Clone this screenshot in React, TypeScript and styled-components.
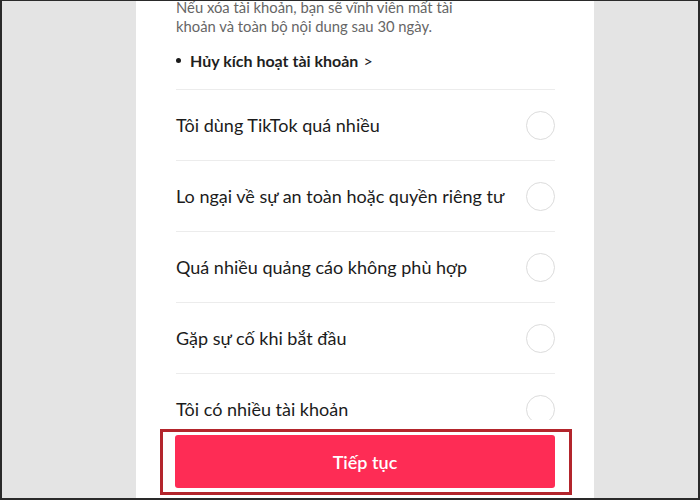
import React from "react";
import styled, { createGlobalStyle } from "styled-components";

const Global = createGlobalStyle`
  html, body { margin: 0; padding: 0; }
  body { width: 700px; height: 500px; overflow: hidden; background: #e5e5e5; }
`;

const Frame = styled.div`
  box-sizing: border-box;
  width: 700px;
  height: 500px;
  border: 1px solid #2a2a2a;
  border-width: 1px 2px 2px 2px;
  background: #e4e4e4;
  display: flex;
  justify-content: flex-start;
  padding-left: 134px;
  overflow: hidden;
`;

const Panel = styled.div`
  position: relative;
  width: 458px;
  height: 100%;
  background: #ffffff;
  overflow: hidden;
  font-family: Lato, "Liberation Sans", sans-serif;
`;

const Content = styled.div`
  padding: 0 39px 0 40px;
  margin-top: -3px;
`;

const Note = styled.p`
  margin: 0;
  font-size: 14.8px;
  line-height: 19px;
  color: #666666;
  width: 300px;
`;

const BulletLink = styled.div`
  display: flex;
  align-items: center;
  gap: 9px;
  margin-top: 14px;
  height: 20px;
  font-size: 16px;
  font-weight: 700;
  color: #1f1f1f;
`;

const Dot = styled.span`
  width: 5px;
  height: 5px;
  border-radius: 50%;
  background: #1a1a1a;
`;

const Chevron = styled.span`
  font-weight: 400;
  margin-left: 5px;
`;

const List = styled.div`
  margin-top: 19px;
`;

const Row = styled.div`
  display: flex;
  align-items: center;
  justify-content: space-between;
  height: 70px;
  border-top: 1px solid #ececec;
`;

const Label = styled.span`
  font-size: 18px;
  color: #1c1c1c;
`;

const Radio = styled.span`
  box-sizing: border-box;
  width: 29px;
  height: 29px;
  border-radius: 50%;
  border: 1.5px solid #dcdcdc;
`;

const Footer = styled.div`
  position: absolute;
  left: 0;
  right: 0;
  bottom: 0;
  height: 78px;
  background: #ffffff;
  display: flex;
  align-items: flex-start;
  padding-top: 9px;
  box-sizing: border-box;
`;

const Highlight = styled.div`
  box-sizing: border-box;
  margin-left: 24px;
  width: 412px;
  height: 66px;
  border: 3px solid #b3252c;
  padding: 3px 14px 4px 12px;
`;

const Button = styled.button`
  width: 100%;
  height: 100%;
  border: none;
  border-radius: 3px;
  background: #fe2c55;
  color: #ffffff;
  font-family: Lato, "Liberation Sans", sans-serif;
  font-size: 18px;
  font-weight: 600;
`;

const reasons = [
  "Tôi dùng TikTok quá nhiều",
  "Lo ngại về sự an toàn hoặc quyền riêng tư",
  "Quá nhiều quảng cáo không phù hợp",
  "Gặp sự cố khi bắt đầu",
  "Tôi có nhiều tài khoản",
];

export default function App() {
  return (
    <>
      <Global />
      <Frame>
        <Panel>
          <Content>
            <Note>
              Nếu xóa tài khoản, bạn sẽ vĩnh viễn mất tài khoản và toàn bộ nội dung sau 30 ngày.
            </Note>
            <BulletLink>
              <Dot />
              <span>
                Hủy kích hoạt tài khoản<Chevron>&gt;</Chevron>
              </span>
            </BulletLink>
            <List>
              {reasons.map((r) => (
                <Row key={r}>
                  <Label>{r}</Label>
                  <Radio />
                </Row>
              ))}
            </List>
          </Content>
          <Footer>
            <Highlight>
              <Button>Tiếp tục</Button>
            </Highlight>
          </Footer>
        </Panel>
      </Frame>
    </>
  );
}
